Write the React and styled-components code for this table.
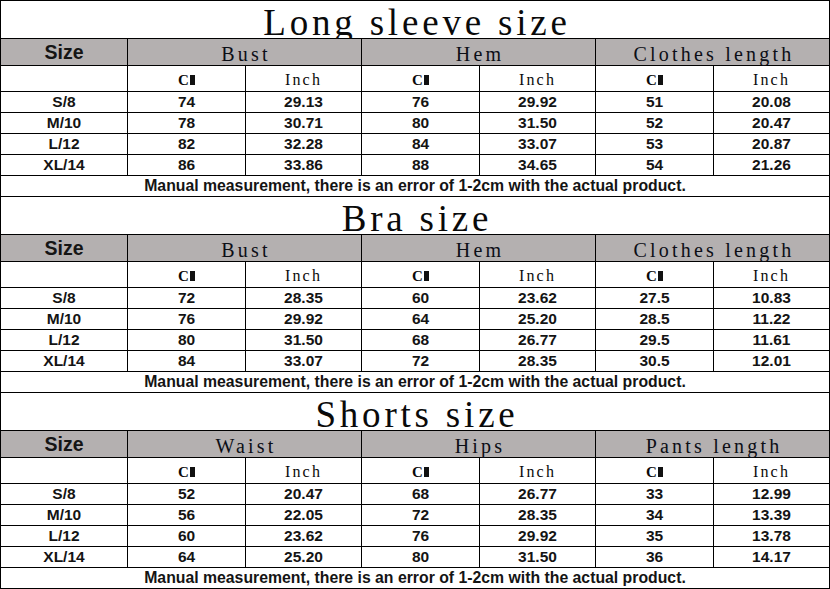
import React from 'react';
import styled, { createGlobalStyle } from 'styled-components';

const GlobalStyle = createGlobalStyle`
  html, body { margin: 0; padding: 0; background: #fff; }
`;

const Page = styled.div`
  width: 830px;
  box-sizing: border-box;
  padding: 1px;
  background: #000;
  display: flex;
  flex-direction: column;
  gap: 1px;
`;

const Section = styled.section`
  display: grid;
  grid-template-columns: 126px 117px 115px 117px 115px 117px 1fr;
  grid-template-rows: 37px 26px 25px repeat(4, 20px) 20px;
  gap: 1px;
`;

const Cell = styled.div`
  background: #fff;
  display: flex;
  align-items: center;
  justify-content: center;
  overflow: visible;
  white-space: nowrap;
`;

const Title = styled(Cell)`
  grid-column: 1 / -1;
  align-items: flex-end;
  font-family: "Liberation Serif", "Times New Roman", serif;
  font-size: 37px;
  line-height: 30px;
  letter-spacing: 3.8px;
  padding-left: 4px;
  color: #0a0a0a;
`;

const HeadSize = styled(Cell)`
  background: #b4b0b0;
  font-family: "Liberation Sans", Arial, sans-serif;
  font-weight: 700;
  font-size: 19.5px;
  color: #151515;
`;

const HeadGroup = styled(Cell)`
  grid-column: span 2;
  background: #b4b0b0;
  font-family: "Liberation Serif", "Times New Roman", serif;
  font-size: 20px;
  letter-spacing: 3.2px;
  padding: 4px 0 0 3px;
  color: #0c0e16;
`;

const Sub = styled(Cell)`
  font-family: "Liberation Serif", "Times New Roman", serif;
  font-size: ${p => (p.$spaced ? '16px' : '15px')};
  letter-spacing: ${p => (p.$spaced ? '2.2px' : '0')};
  font-weight: ${p => (p.$bold ? 700 : 400)};
  padding-top: 3px;
  color: #0a0a0a;
`;

const Cm = styled.span`
  display: inline-flex;
  align-items: baseline;
  &::after {
    content: '';
    display: inline-block;
    width: 5px;
    height: 10px;
    margin-left: 1px;
    background: #111;
  }
`;

const Data = styled(Cell)`
  font-family: "Liberation Sans", Arial, sans-serif;
  font-weight: 700;
  font-size: 15.5px;
  color: #141414;
`;

const Note = styled(Cell)`
  grid-column: 1 / -1;
  font-family: "Liberation Sans", Arial, sans-serif;
  font-weight: 700;
  font-size: 15.8px;
  color: #141414;
`;

const sections = [
  {
    title: 'Long sleeve size',
    groups: ['Bust', 'Hem', 'Clothes length'],
    rows: [
      ['S/8', '74', '29.13', '76', '29.92', '51', '20.08'],
      ['M/10', '78', '30.71', '80', '31.50', '52', '20.47'],
      ['L/12', '82', '32.28', '84', '33.07', '53', '20.87'],
      ['XL/14', '86', '33.86', '88', '34.65', '54', '21.26'],
    ],
  },
  {
    title: 'Bra size',
    groups: ['Bust', 'Hem', 'Clothes length'],
    rows: [
      ['S/8', '72', '28.35', '60', '23.62', '27.5', '10.83'],
      ['M/10', '76', '29.92', '64', '25.20', '28.5', '11.22'],
      ['L/12', '80', '31.50', '68', '26.77', '29.5', '11.61'],
      ['XL/14', '84', '33.07', '72', '28.35', '30.5', '12.01'],
    ],
  },
  {
    title: 'Shorts size',
    groups: ['Waist', 'Hips', 'Pants length'],
    rows: [
      ['S/8', '52', '20.47', '68', '26.77', '33', '12.99'],
      ['M/10', '56', '22.05', '72', '28.35', '34', '13.39'],
      ['L/12', '60', '23.62', '76', '29.92', '35', '13.78'],
      ['XL/14', '64', '25.20', '80', '31.50', '36', '14.17'],
    ],
  },
];

const NOTE = 'Manual measurement, there is an error of 1-2cm with the actual product.';

function SizeTable({ data }) {
  return (
    <Section>
      <Title>{data.title}</Title>
      <HeadSize>Size</HeadSize>
      {data.groups.map(g => (
        <HeadGroup key={g}>{g}</HeadGroup>
      ))}
      <Sub />
      {data.groups.map(g => (
        <React.Fragment key={g}>
          <Sub $bold>
            <Cm>C</Cm>
          </Sub>
          <Sub $spaced>Inch</Sub>
        </React.Fragment>
      ))}
      {data.rows.map(r =>
        r.map((v, i) => <Data key={r[0] + i}>{v}</Data>)
      )}
      <Note>{NOTE}</Note>
    </Section>
  );
}

export default function App() {
  return (
    <>
      <GlobalStyle />
      <Page>
        {sections.map(s => (
          <SizeTable key={s.title} data={s} />
        ))}
      </Page>
    </>
  );
}
